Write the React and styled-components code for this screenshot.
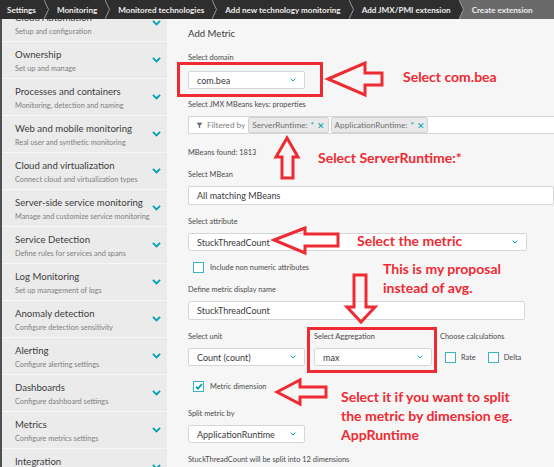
import React from 'react';
import styled, { createGlobalStyle } from 'styled-components';

const teal = '#00a1b2';
const red = '#ee2a33';

const GlobalStyle = createGlobalStyle`
  html, body { margin: 0; padding: 0; }
  body {
    font-family: Lato, "Open Sans", "DejaVu Sans", sans-serif;
    background: #f6f6f6;
    color: #454646;
  }
`;

const Page = styled.div`
  position: relative;
  width: 554px;
  height: 467px;
  overflow: hidden;
  display: flex;
  flex-direction: column;
  background: #f6f6f6;
`;

const Crumbs = styled.nav`
  position: relative;
  z-index: 2;
  height: 19px;
  flex: none;
  display: flex;
  background: #2e2e2e;
`;

const Crumb = styled.div`
  display: flex;
  align-items: center;
  padding: 0 8px 0 ${(p) => (p.first ? 7 : 8)}px;
  background: ${(p) => (p.current ? '#6a6a6a' : 'transparent')};
  flex: ${(p) => (p.current ? 1 : 'none')};
  color: #ececec;
  font-size: 8.1px;
  font-weight: 700;
  white-space: nowrap;
`;

const Sep = ({ next }) => (
  <svg width="5" height="19" viewBox="0 0 5 19" style={{ flex: 'none', background: next ? '#6a6a6a' : 'transparent' }}>
    <polygon points="0,0 4.5,9.5 0,19" fill="#2e2e2e" />
    <polyline points="0,0 4.5,9.5 0,19" fill="none" stroke="#9a9a9a" strokeWidth="1" />
  </svg>
);

const Body = styled.div`
  flex: 1;
  display: flex;
  min-height: 0;
`;

const Sidebar = styled.aside`
  width: 165px;
  flex: none;
  background: #ebebeb;
  border-left: 2px solid #505050;
  overflow: hidden;
`;

const NavList = styled.ul`
  list-style: none;
  margin: -14px 0 0;
  padding: 0;
`;

const NavItem = styled.li`
  height: 36px;
  border-bottom: 1px solid #f7f7f7;
  display: flex;
  align-items: center;
  padding: 0 6px 0 13px;
`;

const NavText = styled.div`
  flex: 1;
  padding-top: 1px;
`;

const NavTitle = styled.div`
  font-size: 9.6px;
  line-height: 12px;
  color: #3c3c3c;
`;

const NavSub = styled.div`
  margin-top: 3px;
  font-size: 7.3px;
  line-height: 9px;
  color: #808080;
  white-space: nowrap;
`;

const Chevron = ({ size = 9, stroke = 2 }) => (
  <svg width={size} height={size * 0.6} viewBox="0 0 10 6" style={{ flex: 'none' }}>
    <polyline points="1,1 5,5 9,1" fill="none" stroke={teal} strokeWidth={stroke} />
  </svg>
);

const Main = styled.main`
  flex: 1;
  padding: 8px 0 0 21px;
  display: flex;
  flex-direction: column;
  min-width: 0;
`;

const Title = styled.h2`
  margin: 0;
  font-size: 9.6px;
  line-height: 14px;
  font-weight: 400;
  color: #3c3c3c;
`;

const Group = styled.div`
  margin-top: ${(p) => p.mt}px;
  display: flex;
  flex-direction: column;
`;

const Label = styled.div`
  font-size: 7.4px;
  line-height: 10px;
  color: #4a4a4a;
  margin-bottom: ${(p) => p.gap ?? 6}px;
  white-space: nowrap;
`;

const Note = styled(Label)`
  margin: ${(p) => p.mt}px 0 0;
`;

const Field = styled.div`
  box-sizing: border-box;
  width: ${(p) => p.w};
  height: ${(p) => p.h || 18}px;
  background: #fff;
  border: 1px solid #d6d6d6;
  border-radius: 2px;
  display: flex;
  align-items: center;
  padding: 0 8px;
  font-size: 9px;
  color: #3a3a3a;
  white-space: nowrap;
  overflow: hidden;
`;

const FieldText = styled.span`
  flex: 1;
`;

const Select = ({ w, children }) => (
  <Field w={w}>
    <FieldText>{children}</FieldText>
    <Chevron size={6} stroke={1.6} />
  </Field>
);

const FilterBar = styled(Field)`
  border-right: none;
  border-radius: 2px 0 0 2px;
  padding-left: 7px;
  gap: 2px;
`;

const Muted = styled.span`
  color: #808080;
  font-size: 8.2px;
  margin: 0 1px 0 2px;
`;

const Tag = styled.span`
  display: inline-flex;
  align-items: center;
  gap: 3px;
  height: 14px;
  padding: 0 3px;
  background: #e9e9e9;
  border: 1px solid #d2d2d2;
  border-radius: 2px;
  font-size: 8.2px;
  color: #707070;
`;

const TagStar = styled.span`
  color: ${teal};
`;

const TagX = styled.span`
  color: ${teal};
  font-weight: 700;
  font-size: 9px;
`;

const CheckRow = styled.label`
  margin-top: ${(p) => p.mt}px;
  display: flex;
  align-items: center;
  gap: 6px;
  padding-left: 5px;
  font-size: 7.4px;
  color: #4a4a4a;
  white-space: nowrap;
`;

const Box = styled.span`
  box-sizing: border-box;
  width: 11px;
  height: 11px;
  border: 1px solid #3bb3bf;
  background: #fff;
  display: inline-flex;
  align-items: center;
  justify-content: center;
  flex: none;
`;

const Check = ({ checked }) => (
  <Box>
    {checked && (
      <svg width="8" height="7" viewBox="0 0 8 7">
        <polyline points="1,3.6 3,5.6 7,1" fill="none" stroke={teal} strokeWidth="1.8" />
      </svg>
    )}
  </Box>
);

const Row = styled.div`
  margin-top: ${(p) => p.mt}px;
  display: flex;
  align-items: flex-start;
`;

const Col = styled.div`
  display: flex;
  flex-direction: column;
  margin-left: ${(p) => p.ml || 0}px;
`;

const Calcs = styled.div`
  display: flex;
  gap: 12px;
  padding: 0 0 0 5px;
  height: 18px;
  align-items: center;
`;

const CalcItem = styled.span`
  display: flex;
  align-items: center;
  gap: 5px;
  font-size: 7.4px;
  color: #4a4a4a;
`;

const Overlay = styled.svg`
  position: absolute;
  inset: 0;
  z-index: 3;
  pointer-events: none;
`;

const Callout = styled.div`
  position: absolute;
  z-index: 3;
  left: ${(p) => p.x}px;
  top: ${(p) => p.y}px;
  font-family: Lato, "Open Sans", sans-serif;
  font-weight: 700;
  font-size: 14px;
  line-height: 19px;
  color: ${red};
  white-space: pre;
`;

const navItems = [
  ['Cloud Automation', 'Setup and configuration'],
  ['Ownership', 'Set up and manage'],
  ['Processes and containers', 'Monitoring, detection and naming'],
  ['Web and mobile monitoring', 'Real user and synthetic monitoring'],
  ['Cloud and virtualization', 'Connect cloud and virtualization types'],
  ['Server-side service monitoring', 'Manage and customize service monitoring'],
  ['Service Detection', 'Define rules for services and spans'],
  ['Log Monitoring', 'Set up management of logs'],
  ['Anomaly detection', 'Configure detection sensitivity'],
  ['Alerting', 'Configure alerting settings'],
  ['Dashboards', 'Configure dashboard settings'],
  ['Metrics', 'Configure metrics settings'],
  ['Integration', 'Connect external tools'],
];

const crumbs = [
  'Settings',
  'Monitoring',
  'Monitored technologies',
  'Add new technology monitoring',
  'Add JMX/PMI extension',
];

const arrows = [
  '328,79 365,63 365,73 382,73 382,85 365,85 365,95',
  '287,138 298,157 293,157 293,178 282,178 282,157 276,157',
  '274,240 305,228 305,234 338,234 338,246 305,246 305,253',
  '354,275 366,275 366,307 375,307 361,322 347,307 354,307',
  '277,392 300,380 300,387 326,387 326,397 300,397 300,404',
];

export default function App() {
  return (
    <>
      <GlobalStyle />
      <Page>
        <Crumbs>
          {crumbs.map((c, i) => (
            <React.Fragment key={c}>
              <Crumb first={i === 0}>{c}</Crumb>
              <Sep next={i === crumbs.length - 1} />
            </React.Fragment>
          ))}
          <Crumb current>Create extension</Crumb>
        </Crumbs>
        <Body>
          <Sidebar>
            <NavList>
              {navItems.map(([t, s]) => (
                <NavItem key={t}>
                  <NavText>
                    <NavTitle>{t}</NavTitle>
                    <NavSub>{s}</NavSub>
                  </NavText>
                  <Chevron />
                </NavItem>
              ))}
            </NavList>
          </Sidebar>
          <Main>
            <Title>Add Metric</Title>
            <Group mt={12}>
              <Label gap={8}>Select domain</Label>
              <Select w="117px">com.bea</Select>
            </Group>
            <Group mt={11}>
              <Label>Select JMX MBeans keys: properties</Label>
              <FilterBar w="calc(100% + 4px)">
                <svg width="7" height="7" viewBox="0 0 8 8">
                  <path d="M0.5 0.8h7L4.8 4v3.2l-1.6-0.8V4z" fill="#6a6a6a" />
                </svg>
                <Muted>Filtered by</Muted>
                <Tag>ServerRuntime: <TagStar>*</TagStar><TagX>✕</TagX></Tag>
                <Tag>ApplicationRuntime: <TagStar>*</TagStar><TagX>✕</TagX></Tag>
              </FilterBar>
            </Group>
            <Note mt={14}>MBeans found: 1813</Note>
            <Group mt={12}>
              <Label>Select MBean</Label>
              <Field w="100%" h={19}>All matching MBeans</Field>
            </Group>
            <Group mt={12}>
              <Label>Select attribute</Label>
              <Select w="339px">StuckThreadCount</Select>
            </Group>
            <CheckRow mt={11}>
              <Check />
              Include non numeric attributes
            </CheckRow>
            <Group mt={12}>
              <Label>Define metric display name</Label>
              <Field w="337px" h={19}>StuckThreadCount</Field>
            </Group>
            <Row mt={12}>
              <Col>
                <Label>Select unit</Label>
                <Select w="117px">Count (count)</Select>
              </Col>
              <Col ml={9}>
                <Label>Select Aggregation</Label>
                <Select w="118px">max</Select>
              </Col>
              <Col ml={8}>
                <Label>Choose calculations</Label>
                <Calcs>
                  <CalcItem><Check />Rate</CalcItem>
                  <CalcItem><Check />Delta</CalcItem>
                </Calcs>
              </Col>
            </Row>
            <CheckRow mt={15}>
              <Check checked />
              Metric dimension
            </CheckRow>
            <Group mt={17}>
              <Label>Split metric by</Label>
              <Select w="117px">ApplicationRuntime</Select>
            </Group>
            <Note mt={12}>StuckThreadCount will be split into 12 dimensions</Note>
          </Main>
        </Body>

        <Overlay width="554" height="467" viewBox="0 0 554 467">
          <rect x="178.5" y="63.5" width="143" height="32" fill="none" stroke={red} strokeWidth="3" />
          <rect x="308.5" y="328.5" width="127" height="43" fill="none" stroke={red} strokeWidth="3" />
          {arrows.map((pts) => (
            <polygon key={pts} points={pts} fill="none" stroke={red} strokeWidth="3" strokeLinejoin="miter" />
          ))}
        </Overlay>
        <Callout x={403} y={67}>Select com.bea</Callout>
        <Callout x={318} y={148}>Select ServerRuntime:*</Callout>
        <Callout x={357} y={231}>Select the metric</Callout>
        <Callout x={383} y={259}>{'This is my proposal\ninstead of avg.'}</Callout>
        <Callout x={341} y={387}>{'Select it if you want to split\nthe metric by dimension eg.\nAppRuntime'}</Callout>
      </Page>
    </>
  );
}
